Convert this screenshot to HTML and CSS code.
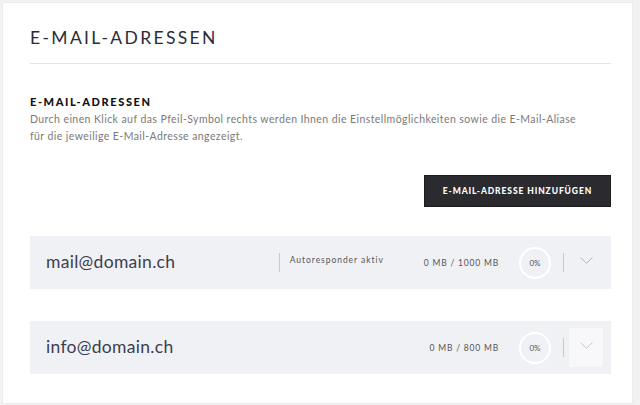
FILE: index.html
```html
<!DOCTYPE html>
<html lang="de">
<head>
<meta charset="utf-8">
<title>E-Mail-Adressen</title>
<link rel="stylesheet" href="styles.css">
</head>
<body>
<div class="page">
  <div class="card">
    <h1 class="title">E-MAIL-ADRESSEN</h1>
    <div class="rule"></div>
    <h2 class="subtitle">E-MAIL-ADRESSEN</h2>
    <p class="desc">Durch einen Klick auf das Pfeil-Symbol rechts werden Ihnen die Einstellmöglichkeiten sowie die E-Mail-Aliase<br>für die jeweilige E-Mail-Adresse angezeigt.</p>
    <div class="actions">
      <button class="btn">E-MAIL-ADRESSE HINZUFÜGEN</button>
    </div>
    <div class="list">
      <div class="row">
        <div class="email">mail@domain.ch</div>
        <div class="auto">Autoresponder aktiv</div>
        <div class="usage">0 MB / 1000 MB</div>
        <div class="circle">0%</div>
        <div class="sep"></div>
        <div class="chev">
          <svg width="13" height="7" viewBox="0 0 13 7"><path d="M0.5 0.5 L6.5 6.2 L12.5 0.5" fill="none" stroke="#b4b6be" stroke-width="1"/></svg>
        </div>
      </div>
      <div class="row">
        <div class="email">info@domain.ch</div>
        <div class="usage usage-solo">0 MB / 800 MB</div>
        <div class="circle">0%</div>
        <div class="sep"></div>
        <div class="chev chev-box">
          <svg width="13" height="7" viewBox="0 0 13 7"><path d="M0.5 0.5 L6.5 6.2 L12.5 0.5" fill="none" stroke="#c4c6cc" stroke-width="1"/></svg>
        </div>
      </div>
    </div>
  </div>
</div>
</body>
</html>
```
FILE: styles.css
```css
* { box-sizing: border-box; }
html, body { margin: 0; padding: 0; background: #ffffff; }
body { font-family: Lato, "Open Sans", sans-serif; color: #2b2b35; }
.page {
  width: 640px;
  height: 405px;
  padding: 2px 0 0 2px;
  background: #f1f1f1;
  overflow: hidden;
}
.card {
  width: 631px;
  height: 402px;
  background: #ffffff;
  border: 1px solid #ececec;
  padding: 0 21px 0 27px;
}
.title {
  margin: 0;
  padding-top: 24px;
  font-size: 17.5px;
  font-weight: 400;
  letter-spacing: 2.35px;
  line-height: 22px;
  color: #2c2c38;
}
.rule {
  margin-top: 14px;
  height: 1px;
  background: #e4e4e6;
}
.subtitle {
  margin: 31px 0 0;
  font-size: 11px;
  font-weight: 900;
  letter-spacing: 1.6px;
  line-height: 14px;
  color: #111;
}
.desc {
  margin: 2px 0 0;
  font-size: 10.5px;
  line-height: 17px;
  color: #7a7a7a;
  letter-spacing: 0.42px;
}
.actions {
  display: flex;
  justify-content: flex-end;
  margin-top: 30px;
}
.btn {
  width: 187px;
  height: 32px;
  background: #2b2b2f;
  border: 1px solid #1c1c1e;
  color: #ffffff;
  font-family: Lato, sans-serif;
  font-size: 8.5px;
  font-weight: 900;
  letter-spacing: 0.9px;
  padding: 0;
}
.list {
  margin-top: 29px;
  display: flex;
  flex-direction: column;
  gap: 32px;
}
.row {
  height: 53px;
  background: #f0f1f5;
  display: flex;
  align-items: center;
  padding: 0 8px 0 16px;
}
.email {
  flex: 1;
  font-size: 17.5px;
  font-weight: 400;
  letter-spacing: 0.3px;
  color: #3d3d4e;
  padding-bottom: 2px;
}
.auto {
  align-self: center;
  border-left: 1px solid #c8c9ce;
  height: 19px;
  padding: 2px 0 0 10px;
  margin-right: 40px;
  font-size: 8.5px;
  letter-spacing: 0.95px;
  color: #555;
  line-height: 10px;
}
.usage {
  font-size: 8.5px;
  letter-spacing: 0.8px;
  color: #555;
  margin-right: 20px;
}
.circle {
  width: 32px;
  height: 32px;
  border-radius: 50%;
  border: 2px solid #ffffff;
  display: flex;
  align-items: center;
  justify-content: center;
  font-size: 8px;
  color: #555;
  margin-right: 12px;
}
.sep {
  width: 1px;
  height: 19px;
  background: #c8c9ce;
  margin-right: 5px;
}
.chev {
  width: 34px;
  height: 39px;
  display: flex;
  align-items: center;
  justify-content: center;
  padding-bottom: 4px;
}
.chev-box { background: #f8f8fa; }
```
